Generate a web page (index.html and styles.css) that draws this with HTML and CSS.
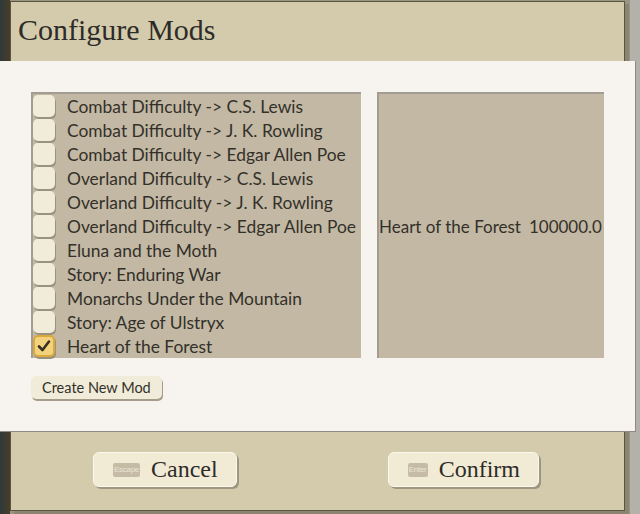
FILE: index.html
```html
<!doctype html>
<html lang="en">
<head>
  <meta charset="UTF-8">
  <title>Configure Mods</title>
  <link rel="stylesheet" href="styles.css">
</head>
<body>
  <div class="scene">
    <div class="dialog">
      <h1 class="title">Configure Mods</h1>
      <div class="panel">
        <div class="lists">
          <ul class="mods">
            <li><span class="check"></span>Combat Difficulty -&gt; C.S. Lewis</li>
            <li><span class="check"></span>Combat Difficulty -&gt; J. K. Rowling</li>
            <li><span class="check"></span>Combat Difficulty -&gt; Edgar Allen Poe</li>
            <li><span class="check"></span>Overland Difficulty -&gt; C.S. Lewis</li>
            <li><span class="check"></span>Overland Difficulty -&gt; J. K. Rowling</li>
            <li><span class="check"></span>Overland Difficulty -&gt; Edgar Allen Poe</li>
            <li><span class="check"></span>Eluna and the Moth</li>
            <li><span class="check"></span>Story: Enduring War</li>
            <li><span class="check"></span>Monarchs Under the Mountain</li>
            <li><span class="check"></span>Story: Age of Ulstryx</li>
            <li><span class="check on"><svg width="14" height="14" viewBox="0 0 14 14"><path d="M2 7.5 L5.5 11 L12 2.5" fill="none" stroke="#3a3020" stroke-width="2.6" stroke-linecap="round" stroke-linejoin="round"/></svg></span>Heart of the Forest</li>
          </ul>
          <div class="order">
            <span>Heart of the Forest</span>
            <span>100000.0</span>
          </div>
        </div>
        <button class="small-btn">Create New Mod</button>
      </div>
      <div class="footer">
        <button class="big-btn"><span class="key esc">Escape</span>Cancel</button>
        <button class="big-btn"><span class="key ent">Enter</span>Confirm</button>
      </div>
    </div>
  </div>
</body>
</html>
```
FILE: styles.css
```css
*{margin:0;
  padding:0;
  list-style:none;
  box-sizing:border-box;}
html,body{height:100%;
          overflow:hidden;}
body{background:linear-gradient(90deg,#2e3a3c 0,#4a3c28 10px,#9a9582 10px,#9a9582 630px,#b4b1aa 630px);}
.scene{padding:1px 0 0 10px;}
.dialog{width:615px;
        height:510px;
        background:#d4cbad;
        border:1px solid #5a5440;
        box-shadow:4px 3px 0 #8a8470;
        display:flex;
        flex-direction:column;}
.title{height:59px;
       padding:11px 0 0 7px;
       font:normal 30px "Liberation Serif",serif;
       color:#2e2c28;}
.panel{height:371px;
       margin:0 -12px 0 -11px;
       background:#f7f4ef;
       border-right:1px solid #8e8a82;
       border-bottom:1px solid #8e8a82;
       padding:31px 0 0 31px;}
.lists{display:flex;
       gap:16px;
       height:266px;}
.mods{width:330px;
      background:#c2b8a3;
      border-top:2px solid #a29c92;
      border-left:2px solid #a29c92;}
.mods li{height:24px;
         display:flex;
         align-items:center;
         font:17.4px "Lato",sans-serif;
         color:#33302a;
         white-space:nowrap;}
.check{width:22px;
       height:22px;
       margin:0 12px 0 0;
       background:#f1ecd9;
       border-radius:5px;
       box-shadow:1px 2px 0 #9a9280;
       display:inline-flex;
       align-items:center;
       justify-content:center;}
.check.on{background:#f2d27c;
          border:2px solid #dba83c;}
.order{width:227px;
       background:#c2b8a3;
       border-top:2px solid #a29c92;
       border-left:2px solid #a29c92;
       display:flex;
       align-items:center;
       gap:8px;
       font:17px "Lato",sans-serif;
       color:#33302a;
       white-space:nowrap;}
.small-btn{margin-top:18px;
           height:23px;
           padding:0 11px;
           background:#f1ecd9;
           border:none;
           border-radius:5px;
           box-shadow:1px 2px 0 #a49c88;
           font:14.5px "Lato",sans-serif;
           color:#33302a;}
.footer{flex:1;
        display:flex;
        gap:151px;
        padding:20px 0 0 82px;}
.big-btn{height:35px;
         padding:0 18px 0 19px;
         background:#f1ebd6;
         border:1px solid #fbf8ec;
         border-radius:6px;
         box-shadow:2px 2px 0 #9c9682;
         display:flex;
         align-items:center;
         gap:11px;
         font:24px "Liberation Serif",serif;
         color:#2e2c28;}
.key{height:14px;
     background:#c6bca6;
     border-radius:2px;
     overflow:hidden;
     text-align:center;
     font:8px "Liberation Sans",sans-serif;
     letter-spacing:-0.3px;
     line-height:14px;
     color:#ebe5d3;}
.key.esc{width:27px;}
.key.ent{width:20px;}
```
